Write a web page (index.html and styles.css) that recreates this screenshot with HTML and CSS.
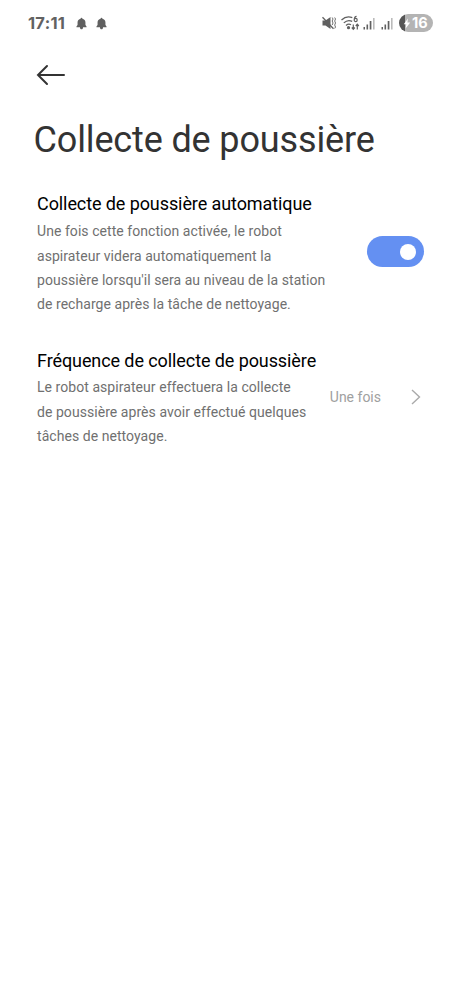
FILE: index.html
```html
<!DOCTYPE html>
<html lang="fr">
<head>
<meta charset="utf-8">
<title>Collecte de poussière</title>
<link rel="stylesheet" href="styles.css">
</head>
<body>
<header class="status">
  <span class="time">17:11</span>
  <svg class="bell" viewBox="0 0 12 14"><path d="M6 .8c.7 0 1 .4 1 1 1.900.5 3.300 2 3.300 3.700v3L11.500 10.200v1H.5v-1L1.700 8.500v-3C1.700 3.800 3.100 2.300 5 1.800c0-.6.3-1 1-1zM4.300 11h3.400c0 1.600-.7 2.200-1.700 2.200s-1.700-.6-1.700-2.200z"/></svg>
  <svg class="bell" viewBox="0 0 12 14"><path d="M6 .8c.7 0 1 .4 1 1 1.900.5 3.300 2 3.300 3.700v3L11.500 10.200v1H.5v-1L1.700 8.500v-3C1.700 3.800 3.100 2.300 5 1.800c0-.6.3-1 1-1zM4.300 11h3.400c0 1.600-.7 2.200-1.700 2.200s-1.700-.6-1.700-2.200z"/></svg>
  <span class="spacer"></span>
  <svg class="mute" viewBox="0 0 14 14"><path class="fill" d="M.5 4.500h3L8.500 1v12L3.500 9.500h-3z"/><path class="line" d="M.5 1.200l11 11.500"/><path class="wave" d="M10.200 1.500l.8 1.500-.8 2 .8 2-.8 2M12.700 1.500l.8 1.500-.8 2 .8 2-.8 2 .8 2-.8 1.500"/></svg>
  <svg class="wifi" viewBox="0 0 19 16"><path class="line" d="M.5 5Q5.500 .3 11.300 2.700M2.800 7.900Q6.700 4.200 11.200 6.400M5 10.400Q7.500 8.200 10 9.700"/><circle class="fill" cx="7.500" cy="12.700" r="1.600"/><path class="six" d="M15.600 1.300Q13.300 1.300 13.200 5M13.200 5a1.500 1.600 0 1 0 3 0a1.500 1.600 0 1 0-3 0"/><path class="six" d="M12.300 9.500v4.700M10.800 12.500l1.500 1.800 1.500-1.800M16.300 14.500V9.200M14.800 11l1.500-1.800L17.800 11"/></svg>
  <svg class="signal" viewBox="0 0 12 13"><path class="fill" d="M.5 10H2V12.500H.5zM3.500 7.500h1.600v5H3.500zM6.700 4h1.700v8.500H6.700z"/><path class="dim" d="M10 1h1.600v11.500H10z"/></svg>
  <svg class="signal" viewBox="0 0 12 13"><path class="fill" d="M.5 10H2V12.500H.5zM3.500 7.500h1.600v5H3.500zM6.700 4h1.700v8.500H6.700z"/><path class="dim" d="M10 1h1.600v11.500H10z"/></svg>
  <div class="battery"><svg class="bolt" viewBox="0 0 8 12"><path d="M5 .5L.5 6.700h2.700L2.500 11.500 7.500 5H4.500z"/></svg><span>16</span></div>
</header>
<nav class="nav"><svg class="back" viewBox="0 0 30 22"><path d="M28 11H2M11 2L2 11l9 9"/></svg></nav>
<main>
  <h1>Collecte de poussière</h1>
  <section class="row auto">
    <div class="copy">
      <h2>Collecte de poussière automatique</h2>
      <p>Une fois cette fonction activée, le robot<br>aspirateur videra automatiquement la<br>poussière lorsqu'il sera au niveau de la station<br>de recharge après la tâche de nettoyage.</p>
    </div>
    <div class="toggle"><span class="knob"></span></div>
  </section>
  <section class="row freq">
    <div class="copy">
      <h2>Fréquence de collecte de poussière</h2>
      <p>Le robot aspirateur effectuera la collecte<br>de poussière après avoir effectué quelques<br>tâches de nettoyage.</p>
    </div>
    <div class="choice"><span>Une fois</span><svg class="chevron" viewBox="0 0 10 16"><path d="M1 1l7.500 7L1 15"/></svg></div>
  </section>
</main>
</body>
</html>
```
FILE: styles.css
```css
* { box-sizing: border-box; }
body { margin: 0; background: #fff; font-family: Roboto, sans-serif; color: #000; }
svg { display: block; flex: none; fill: none; }
.status { display: flex; align-items: center; height: 46px; padding: 0 27px 0 28px; }
.time { width: 38px; margin-right: 10px; font: 700 16.5px/20px Inter, sans-serif; letter-spacing: .25px; color: #626262; white-space: nowrap; }
.bell { width: 11px; height: 13px; margin-right: 9px; fill: #606060; }
.spacer { flex: 1; }
.fill { fill: #606060; }
.dim { fill: #bbb; }
.line { stroke: #606060; stroke-width: 1.3; }
.wave { stroke: #707070; stroke-width: 1; }
.six { stroke: #606060; stroke-width: 1.2; }
.mute { width: 14px; height: 14px; margin-right: 5px; }
.wifi { width: 19px; height: 16px; margin-right: 3px; }
.signal { width: 12px; height: 13px; margin-right: 6px; }
.battery { display: flex; align-items: center; width: 34px; height: 18px; padding-left: 4px; border-radius: 9px; background: linear-gradient(90deg, #555 5.500px, #b4b4b4 5.500px); color: #fff; font: 700 14.5px/18px Inter, sans-serif; }
.bolt { width: 8px; height: 11px; margin-right: 1px; fill: #fff; }
.nav { height: 58px; padding: 17.500px 0 0 36px; }
.back { width: 30px; height: 22px; }
.back path { stroke: #333; stroke-width: 2; stroke-linecap: round; }
h1 { margin: 14px 0 0 33.5px; font-size: 36px; line-height: 44px; font-weight: 400; letter-spacing: -.14px; color: #333; white-space: nowrap; }
.row { display: flex; justify-content: space-between; padding-left: 37px; white-space: nowrap; }
.copy { width: 288px; }
h2 { margin: 0; font-size: 18px; line-height: 24px; font-weight: 400; letter-spacing: -.09px; }
p { margin: 0; font-size: 14px; line-height: 24.300px; letter-spacing: .055px; color: #707070; }
.auto { padding-top: 30px; padding-right: 36.500px; }
.auto p { margin-top: 3.300px; }
.toggle { width: 56.500px; height: 31px; margin-top: 44px; padding: 7.500px; border-radius: 16px; background: #6490f2; }
.knob { display: block; width: 16px; height: 16px; margin-left: auto; border-radius: 50%; background: #fff; }
.freq { padding-top: 33px; padding-right: 39px; }
.freq p { margin-top: 1.800px; }
.choice { display: flex; align-items: center; height: 20px; margin-top: 38px; font-size: 14px; color: #a0a0a0; }
.chevron { width: 10px; height: 16px; margin-left: 30px; }
.chevron path { stroke: #aaa; stroke-width: 1.400; }
```
